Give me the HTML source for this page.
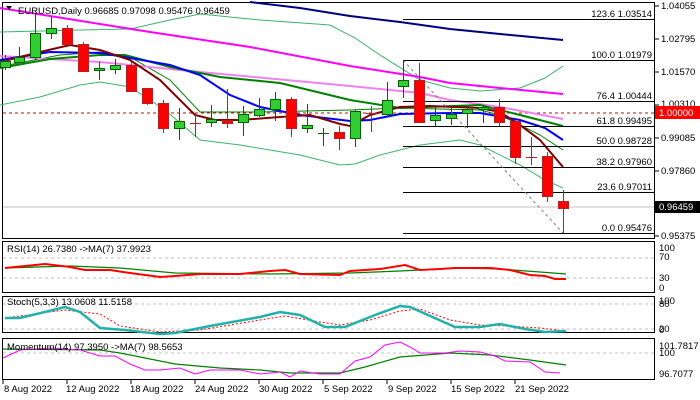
<!DOCTYPE html>
<html><head><meta charset="utf-8"><style>
html,body{margin:0;padding:0;background:#fff;}
svg{display:block;font-family:"Liberation Sans",sans-serif;font-size:9.5px;}
</style></head><body>
<svg width="700" height="400" viewBox="0 0 700 400" xmlns="http://www.w3.org/2000/svg">
<rect width="700" height="400" fill="#fff"/>
<rect x="2.5" y="2.5" width="652" height="236" fill="none" stroke="#000"/>
<line x1="3" y1="207" x2="654" y2="207" stroke="#c0c0c0"/>
<line x1="3" y1="113" x2="654" y2="113" stroke="#e00000" stroke-dasharray="3,3"/>
<polyline fill="none" stroke="#3cb371" stroke-width="1" points="0,32 80,30 130,29 170,20 200,14 260,20 330,25 355,38 380,55 420,80 450,88 480,91 520,88 545,78 563,66"/>
<polyline fill="none" stroke="#3cb371" stroke-width="1" points="0,105 40,97 80,85 100,82 130,87 165,110 200,140 240,145 300,155 340,165 355,164 380,155 420,145 460,140 480,145 520,165 545,180 563,188"/>
<polyline fill="none" stroke="#008000" stroke-width="1" points="3,66 60,55 100,52 130,57 170,80 200,112 260,112 350,110 400,108 480,110 500,115 540,135 563,150"/>
<polyline fill="none" stroke="#000080" stroke-width="2" points="250,2 300,8 350,16 400,22 450,29 500,34 563,40"/>
<polyline fill="none" stroke="#ff00ff" stroke-width="2" points="0,8 150,32 250,47 350,66 420,77 450,83 500,88 563,94"/>
<polyline fill="none" stroke="#ee82ee" stroke-width="2" points="0,56 100,62 200,72 350,86 420,93 450,100 500,107 563,119"/>
<polyline fill="none" stroke="#008000" stroke-width="2" points="0,68 50,59 100,55 125,55 170,67 220,77 280,83 350,100 400,108 480,105 520,115 563,126"/>
<polyline fill="none" stroke="#0000ff" stroke-width="2" points="0,60 50,52 100,53 130,58 170,65 200,75 230,95 260,107 300,115 350,121 370,120 400,114 450,113 480,113 520,120 545,128 563,140"/>
<polyline fill="none" stroke="#800000" stroke-width="2" points="0,62 40,52 70,45 100,50 130,60 160,80 195,115 215,120 240,120 280,117 310,115 340,124 350,126 370,115 400,107 430,106 480,108 500,112 520,125 540,140 563,167"/>
<g stroke="#000" stroke-width="1">
<line x1="403" y1="19.5" x2="654" y2="19.5"/><line x1="403" y1="60.5" x2="654" y2="60.5"/>
<line x1="403" y1="101.5" x2="654" y2="101.5"/><line x1="403" y1="126.5" x2="654" y2="126.5"/>
<line x1="403" y1="146.5" x2="654" y2="146.5"/><line x1="403" y1="167.5" x2="654" y2="167.5"/>
<line x1="403" y1="192.5" x2="654" y2="192.5"/><line x1="403" y1="233.5" x2="654" y2="233.5"/>
</g>
<line x1="403" y1="60" x2="563" y2="233" stroke="#808080" stroke-dasharray="3,3"/>
<g text-anchor="end" fill="#000">
<text x="652" y="17">123.6 1.03514</text><text x="652" y="58">100.0 1.01979</text>
<text x="652" y="99">76.4 1.00444</text><text x="652" y="124">61.8 0.99495</text>
<text x="652" y="144">50.0 0.98728</text><text x="652" y="165">38.2 0.97960</text>
<text x="652" y="190">23.6 0.97011</text><text x="652" y="231">0.0 0.95476</text>
</g>
<g stroke-width="1">
<g stroke="#006400">
<line x1="5.5" y1="55" x2="5.5" y2="70"/><line x1="19.5" y1="47" x2="19.5" y2="62"/><line x1="35.5" y1="13" x2="35.5" y2="60"/><line x1="51.5" y1="17" x2="51.5" y2="39"/>
<line x1="99.5" y1="62" x2="99.5" y2="80"/><line x1="115.5" y1="59" x2="115.5" y2="74"/><line x1="179.5" y1="108" x2="179.5" y2="140"/><line x1="211.5" y1="105" x2="211.5" y2="127"/>
<line x1="243.5" y1="106" x2="243.5" y2="136"/><line x1="259.5" y1="98" x2="259.5" y2="117"/><line x1="275.5" y1="92" x2="275.5" y2="121"/><line x1="307.5" y1="104" x2="307.5" y2="133"/>
<line x1="323.5" y1="128" x2="323.5" y2="146"/><line x1="318" y1="133.5" x2="329" y2="133.5"/><line x1="355.5" y1="110" x2="355.5" y2="147"/><line x1="387.5" y1="82" x2="387.5" y2="117"/>
<line x1="403.5" y1="60" x2="403.5" y2="98"/><line x1="435.5" y1="107" x2="435.5" y2="127"/><line x1="451.5" y1="106" x2="451.5" y2="125"/><line x1="467.5" y1="107" x2="467.5" y2="128"/><line x1="483.5" y1="105" x2="483.5" y2="123"/>
</g>
<g stroke="#b22222">
<line x1="67.5" y1="25" x2="67.5" y2="47"/><line x1="83.5" y1="42" x2="83.5" y2="72"/><line x1="131.5" y1="62" x2="131.5" y2="92"/><line x1="147.5" y1="88" x2="147.5" y2="105"/>
<line x1="163.5" y1="100" x2="163.5" y2="133"/><line x1="195.5" y1="113" x2="195.5" y2="137"/><line x1="190" y1="123.5" x2="201" y2="123.5"/><line x1="227.5" y1="89" x2="227.5" y2="128"/>
<line x1="291.5" y1="97" x2="291.5" y2="137"/><line x1="339.5" y1="126" x2="339.5" y2="150"/><line x1="371.5" y1="106" x2="371.5" y2="132"/><line x1="366" y1="113.5" x2="377" y2="113.5"/>
<line x1="419.5" y1="63" x2="419.5" y2="123"/><line x1="499.5" y1="99" x2="499.5" y2="126"/><line x1="515.5" y1="120" x2="515.5" y2="164"/><line x1="531.5" y1="137" x2="531.5" y2="165"/><line x1="526" y1="157.5" x2="537" y2="157.5"/>
<line x1="547.5" y1="152" x2="547.5" y2="202"/><line x1="563.5" y1="190" x2="563.5" y2="233"/>
</g>
<g fill="#32cd32" stroke="#006400">
<rect x="0.5" y="61.5" width="10" height="6"/><rect x="14.5" y="57.5" width="10" height="5"/><rect x="30.5" y="33.5" width="10" height="24"/><rect x="46.5" y="28.5" width="10" height="5"/>
<rect x="94.5" y="68.5" width="10" height="2"/><rect x="110.5" y="65.5" width="10" height="4"/><rect x="174.5" y="121.5" width="10" height="7"/><rect x="206.5" y="119.5" width="10" height="3"/>
<rect x="238.5" y="114.5" width="10" height="8"/><rect x="254.5" y="109.5" width="10" height="6"/><rect x="270.5" y="99.5" width="10" height="10"/><rect x="302.5" y="125.5" width="10" height="3"/>
<rect x="350.5" y="111.5" width="10" height="27"/><rect x="382.5" y="100.5" width="10" height="14"/><rect x="398.5" y="80.5" width="10" height="6"/>
<rect x="430.5" y="115.5" width="10" height="5"/><rect x="446.5" y="114.5" width="10" height="4"/><rect x="462.5" y="109.5" width="10" height="4"/><rect x="478.5" y="107.5" width="10" height="2"/>
</g>
<g fill="#ff0000" stroke="#b22222">
<rect x="62.5" y="28.5" width="10" height="16"/><rect x="78.5" y="44.5" width="10" height="27"/><rect x="126.5" y="65.5" width="10" height="26"/><rect x="142.5" y="88.5" width="10" height="15"/>
<rect x="158.5" y="103.5" width="10" height="25"/><rect x="222.5" y="120.5" width="10" height="3"/><rect x="286.5" y="99.5" width="10" height="29"/><rect x="334.5" y="132.5" width="10" height="6"/>
<rect x="414.5" y="80.5" width="10" height="42"/><rect x="494.5" y="107.5" width="10" height="15"/><rect x="510.5" y="121.5" width="10" height="36"/><rect x="542.5" y="156.5" width="10" height="40"/><rect x="558.5" y="201.5" width="10" height="7"/>
</g>
</g>
<path d="M6 6 L12 6 L9 10 Z" fill="#000"/>
<text x="18" y="14" fill="#000">EURUSD,Daily  0.96685 0.97098 0.95476 0.96459</text>
<g fill="#000">
<line x1="655" y1="6" x2="659" y2="6" stroke="#000"/><text x="661" y="9">1.04055</text>
<line x1="655" y1="39" x2="659" y2="39" stroke="#000"/><text x="661" y="42">1.02795</text>
<line x1="655" y1="72" x2="659" y2="72" stroke="#000"/><text x="661" y="75">1.01570</text>
<line x1="655" y1="105" x2="659" y2="105" stroke="#000"/><text x="661" y="107">1.00310</text>
<line x1="655" y1="138" x2="659" y2="138" stroke="#000"/><text x="661" y="141">0.99085</text>
<line x1="655" y1="171" x2="659" y2="171" stroke="#000"/><text x="661" y="174">0.97860</text>
<line x1="655" y1="236" x2="659" y2="236" stroke="#000"/><text x="661" y="239">0.95375</text>
</g>
<rect x="655" y="106" width="45" height="13" fill="#ff0000"/>
<text x="659" y="116" fill="#fff">1.00000</text>
<rect x="655" y="201" width="45" height="12" fill="#000"/>
<text x="659" y="210" fill="#fff">0.96459</text>
<rect x="2.5" y="241.5" width="652" height="51" fill="none" stroke="#000"/>
<line x1="3" y1="258" x2="654" y2="258" stroke="#c0c0c0" stroke-dasharray="3,3"/>
<line x1="3" y1="278" x2="654" y2="278" stroke="#c0c0c0" stroke-dasharray="3,3"/>
<polyline fill="none" stroke="#008000" stroke-width="1.2" points="5,268 70,266 120,268 175,273 270,274 350,273 400,271 460,268 500,269 540,272 566,274"/>
<polyline fill="none" stroke="#ff0000" stroke-width="2" points="5,268 45,264 70,267 85,270 110,270 130,273 160,277 175,276 200,274 240,274 270,271 285,270 300,274 340,275 350,271 380,269 405,265 420,270 440,269 455,268 490,268 510,270 530,275 545,276 555,279 566,279"/>
<text x="7" y="252" fill="#000">RSI(14) 26.7380  -&gt;MA(7) 37.9923</text>
<g fill="#000"><text x="659" y="251">100</text><text x="659" y="260">70</text><text x="659" y="281">30</text><text x="659" y="291">0</text></g>
<rect x="2.5" y="296.5" width="652" height="36" fill="none" stroke="#000"/>
<line x1="3" y1="304" x2="654" y2="304" stroke="#c0c0c0" stroke-dasharray="3,3"/>
<line x1="3" y1="329" x2="654" y2="329" stroke="#c0c0c0" stroke-dasharray="3,3"/>
<polyline fill="none" stroke="#ff0000" stroke-width="1" stroke-dasharray="2,2" points="5,318 65,310 100,314 120,326 160,332 200,330 260,320 285,316 320,322 340,325 370,320 400,311 420,309 450,320 480,325 510,326 540,328 566,331"/>
<polyline fill="none" stroke="#20b2aa" stroke-width="2.5" points="5,318 20,318 65,307 80,312 100,328 125,330 160,334 175,333 210,326 260,317 280,312 300,315 325,327 345,327 375,315 400,306 410,307 455,327 480,327 500,324 525,329 545,332 566,331"/>
<text x="7" y="305" fill="#000">Stoch(5,3,3) 13.0608 11.5158</text>
<g fill="#000"><text x="659" y="304">100</text><text x="659" y="307">80</text><text x="659" y="332">20</text><text x="659" y="333">0</text></g>
<rect x="2.5" y="338.5" width="652" height="41" fill="none" stroke="#000"/>
<line x1="3" y1="353" x2="654" y2="353" stroke="#c0c0c0" stroke-dasharray="3,3"/>
<polyline fill="none" stroke="#008000" stroke-width="1.2" points="3,349 100,350 120,353 175,364 220,368 260,370 290,373 340,373 365,367 400,357 450,353 490,355 530,360 566,365"/>
<polyline fill="none" stroke="#ff00ff" stroke-width="1" points="3,358 20,350 50,348 80,350 100,356 115,356 130,364 145,370 160,370 180,368 195,374 210,370 240,370 260,374 280,372 290,377 300,371 320,374 340,374 355,361 370,357 385,345 400,342 410,347 420,353 445,353 460,351 480,352 495,356 505,361 530,362 545,372 560,373"/>
<text x="7" y="350" fill="#000">Momentum(14) 97.3950  -&gt;MA(7) 98.5653</text>
<g fill="#000"><text x="659" y="349">101.7817</text><text x="659" y="356">100</text><text x="659" y="377">96.7077</text></g>
<g stroke="#000"><line x1="3" y1="380" x2="3" y2="384"/><line x1="67" y1="380" x2="67" y2="384"/><line x1="131" y1="380" x2="131" y2="384"/><line x1="195" y1="380" x2="195" y2="384"/><line x1="259" y1="380" x2="259" y2="384"/><line x1="323" y1="380" x2="323" y2="384"/><line x1="387" y1="380" x2="387" y2="384"/><line x1="451" y1="380" x2="451" y2="384"/><line x1="515" y1="380" x2="515" y2="384"/></g>
<g fill="#000">
<text x="4" y="392">8 Aug 2022</text><text x="66" y="392">12 Aug 2022</text><text x="130" y="392">18 Aug 2022</text><text x="195" y="392">24 Aug 2022</text><text x="259" y="392">30 Aug 2022</text><text x="324" y="392">5 Sep 2022</text><text x="388" y="392">9 Sep 2022</text><text x="451" y="392">15 Sep 2022</text><text x="515" y="392">21 Sep 2022</text>
</g>
</svg>
</body></html>
